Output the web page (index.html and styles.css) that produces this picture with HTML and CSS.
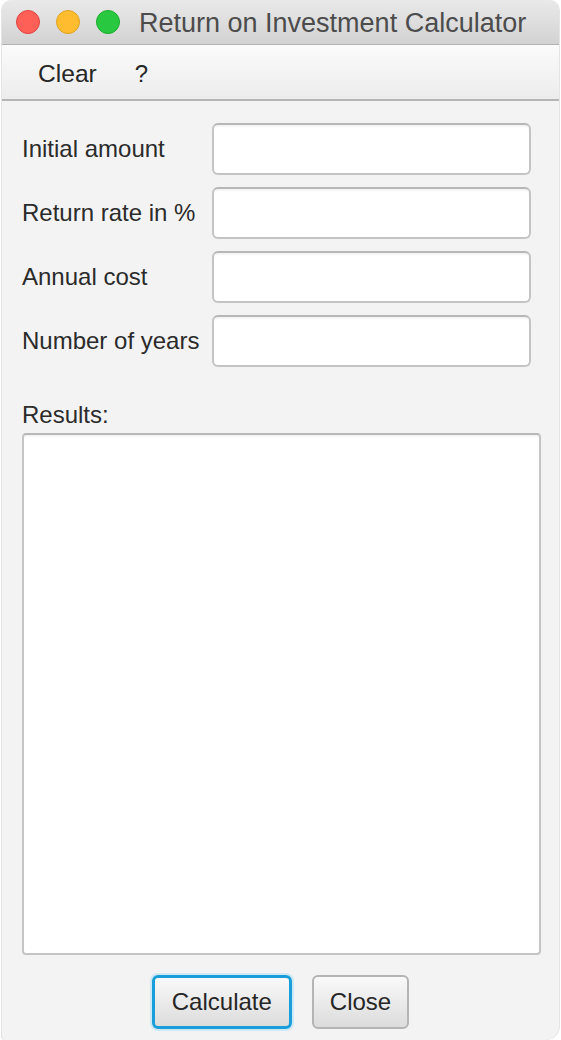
FILE: index.html
```html
<!DOCTYPE html>
<html>
<head>
<meta charset="utf-8">
<link rel="stylesheet" href="styles.css">
</head>
<body>
<div class="window">
  <div class="titlebar">
    <div class="lights">
      <span class="light red"></span>
      <span class="light yellow"></span>
      <span class="light green"></span>
    </div>
    <div class="title">Return on Investment Calculator</div>
  </div>
  <div class="menubar">
    <span class="menu-item">Clear</span>
    <span class="menu-item">?</span>
  </div>
  <div class="content">
    <div class="form">
      <label class="label">Initial amount</label>
      <div class="field"></div>
      <label class="label">Return rate in %</label>
      <div class="field"></div>
      <label class="label">Annual cost</label>
      <div class="field"></div>
      <label class="label">Number of years</label>
      <div class="field"></div>
    </div>
    <div class="results-label">Results:</div>
    <div class="results"></div>
    <div class="buttons">
      <div class="btn btn-default">Calculate</div>
      <div class="btn">Close</div>
    </div>
  </div>
</div>
</body>
</html>
```

FILE: styles.css
```css
html, body {
  margin: 0;
  padding: 0;
  background: #ffffff;
}
body {
  font-family: "Liberation Sans", Arial, sans-serif;
  color: #2b2b2b;
}
.window {
  margin-left: 2px;
  width: 557px;
  height: 1040px;
  background: #f3f3f3;
  border-radius: 10px 10px 14px 4px;
  overflow: hidden;
  box-shadow: -1px 0 0 #e4e4e4, 1px 0 0 #e4e4e4;
  display: flex;
  flex-direction: column;
}
.titlebar {
  height: 44px;
  flex: none;
  background: linear-gradient(#e9e9e9, #d2d2d2);
  border-bottom: 1px solid #b2b2b2;
  display: flex;
  align-items: center;
}
.lights {
  display: flex;
  gap: 16px;
  padding-left: 14px;
}
.light {
  width: 24px;
  height: 24px;
  border-radius: 50%;
  box-sizing: border-box;
}
.red { background: #fe5f57; border: 1px solid #e0443e; }
.yellow { background: #febc2e; border: 1px solid #dea123; }
.green { background: #28c840; border: 1px solid #1aab29; }
.title {
  margin-left: 19px;
  font-size: 27px;
  color: #4c4c4c;
  padding-top: 3px;
}
.menubar {
  height: 54px;
  flex: none;
  box-sizing: border-box;
  padding-top: 4px;
  background: linear-gradient(#fbfbfb, #ececec);
  border-bottom: 2px solid #b5b5b5;
  display: flex;
  align-items: center;
  padding-left: 36px;
  gap: 38px;
  font-size: 24px;
  color: #262626;
}
.menubar { height: 56px; }
.menu-item:first-child {
  font-size: 24.6px;
}
.content {
  padding: 22px 19px 0 20px;
  display: flex;
  flex-direction: column;
}
.form {
  display: grid;
  grid-template-columns: 190px 319px;
  row-gap: 12px;
  align-items: center;
}
.label {
  font-size: 24px;
  color: #2b2b2b;
}
.field {
  height: 52px;
  box-sizing: border-box;
  border: 2px solid #c4c4c4;
  border-top-color: #b8b8b8;
  border-radius: 6px;
  background: #ffffff;
  box-shadow: inset 0 3px 3px -2px rgba(0,0,0,0.08);
}
.results-label {
  margin-top: 35px;
  font-size: 24px;
  line-height: 26px;
  color: #2b2b2b;
}
.results {
  margin-top: 5px;
  width: 519px;
  height: 522px;
  box-sizing: border-box;
  border: 2px solid #c4c4c4;
  border-top-color: #b8b8b8;
  border-radius: 4px;
  background: #ffffff;
  box-shadow: inset 0 3px 3px -2px rgba(0,0,0,0.08);
}
.buttons {
  margin-top: 20px;
  display: flex;
  justify-content: center;
  gap: 20px;
  padding-right: 1px;
}
.btn {
  height: 54px;
  box-sizing: border-box;
  padding: 0 16px;
  border: 2px solid #b4b4b4;
  border-radius: 6px;
  background: linear-gradient(#f9f9f9, #dcdcdc);
  font-size: 24px;
  color: #262626;
  display: flex;
  align-items: center;
  justify-content: center;
}
.btn-default {
  border: 3px solid #1a9ed9;
  box-shadow: 0 0 0 2px #cde9f6;
  padding: 0 17px;
}
```
